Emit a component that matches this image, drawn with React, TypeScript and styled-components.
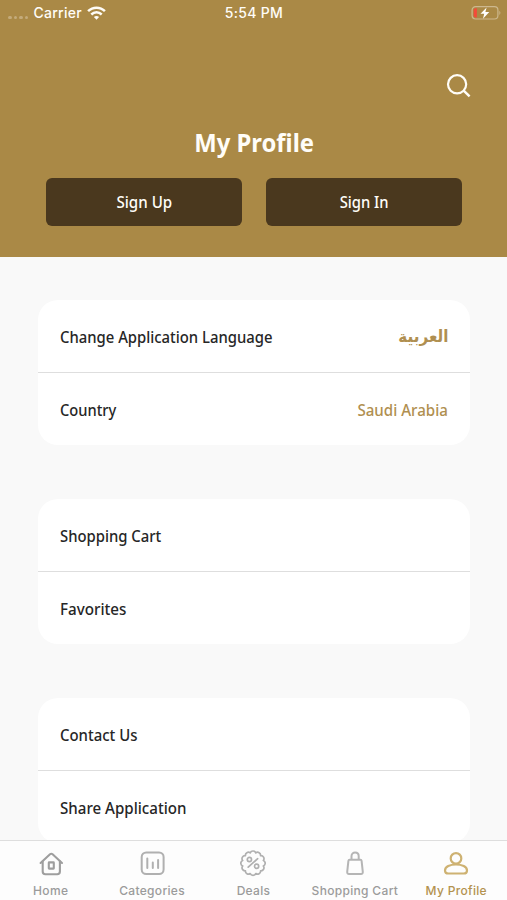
import React from "react";
import styled, { createGlobalStyle } from "styled-components";

const gold = "#aa8946";

const GlobalStyle = createGlobalStyle`
  * { box-sizing: border-box; }
  body { margin: 0; background: #f9f9f9; }
  button { border: 0; padding: 0; background: none; font: inherit; color: inherit; }
`;

const Screen = styled.div`
  display: flex;
  flex-direction: column;
  height: 900px;
  width: 507px;
  overflow: hidden;
  background: #f9f9f9;
  font-family: "Noto Sans", "DejaVu Sans", sans-serif;
`;

const Header = styled.header`
  flex: none;
  height: 256.5px;
  background: ${gold};
  color: #fffdf8;
  display: flex;
  flex-direction: column;
`;

const StatusBar = styled.div`
  height: 26px;
  display: grid;
  grid-template-columns: 1fr auto 1fr;
  align-items: center;
  padding: 0 6px 0 8px;
  font: 500 14px/26px Inter, sans-serif;
  letter-spacing: 0.25px;
`;

const StatusLeft = styled.div`
  display: flex;
  align-items: center;
  gap: 5.5px;
`;

const StatusRight = styled.div`
  display: flex;
  justify-content: flex-end;
`;

const SignalDots = styled.div`
  display: flex;
  gap: 2px;
  padding-top: 9px;
  i { width: 3.5px; height: 3.5px; border-radius: 50%; background: #c4ab7b; }
`;

const Clock = styled.span`
  margin-left: -1px;
  letter-spacing: 0.3px;
`;

const SearchRow = styled.div`
  display: flex;
  justify-content: flex-end;
  padding: 47px 36px 0 0;
  svg { display: block; }
`;

const Title = styled.h1`
  margin: 25px 0 0;
  padding-left: 1px;
  text-align: center;
  font-size: 25.5px;
  line-height: 38px;
  font-weight: 700;
`;

const Actions = styled.div`
  display: grid;
  grid-template-columns: 1fr 1fr;
  gap: 24px;
  padding: 0 45px 0 46px;
  margin-top: 16.5px;
`;

const ActionButton = styled.button`
  height: 48.5px;
  border-radius: 6px;
  background: #4a381e;
  font-size: 17px;
  font-weight: 500;
`;

const Text = styled.span<{ $scale?: number; $origin?: string }>`
  display: inline-block;
  white-space: nowrap;
  transform: scaleX(${(p) => p.$scale ?? 1});
  transform-origin: ${(p) => p.$origin ?? "center"};
`;

const Content = styled.main`
  flex: 1;
  min-height: 0;
  overflow: hidden;
  padding: 43.7px 37px 0 38px;
  display: flex;
  flex-direction: column;
  gap: 54.7px;
`;

const Card = styled.section`
  flex: none;
  background: #fff;
  border-radius: 20px;
`;

const Row = styled.div`
  height: 72px;
  padding: 1px 22px 0 21.5px;
  display: flex;
  align-items: center;
  justify-content: space-between;
  font-size: 16.5px;
  font-weight: 550;
  color: #262626;
  & + & {
    height: 72.4px;
    border-top: 1px solid #dedede;
  }
`;

const Value = styled.span<{ $arabic?: boolean }>`
  color: #b08f50;
  ${(p) => p.$arabic && `font: 700 16.5px/22px "DejaVu Sans", sans-serif;`}
`;

const TabBar = styled.nav`
  flex: none;
  height: 60px;
  border-top: 1px solid #dedede;
  background: #fdfdfd;
  display: grid;
  grid-template-columns: repeat(5, minmax(0, 1fr));
`;

const Tab = styled.button<{ $active?: boolean }>`
  display: flex;
  flex-direction: column;
  align-items: center;
  padding-top: 8px;
  gap: 4px;
  color: ${(p) => (p.$active ? "#b3924f" : "#9b9b9b")};
  font: 500 12px/20px Inter, sans-serif;
  letter-spacing: 0.32px;
  white-space: nowrap;
  svg { display: block; flex: none; }
`;

const Wifi = () => (
  <svg width="19" height="14" viewBox="0 0 19 14" fill="none" stroke="#fffdf8" strokeWidth="2.5">
    <path d="M1.1 5.2C5.8.5 13.2.5 17.9 5.2" />
    <path d="M4.3 8.5c3-2.9 7.4-2.9 10.4 0" />
    <path d="M6.9 11.1c1.5-1.4 3.7-1.4 5.2 0L9.5 13.7Z" fill="#fffdf8" stroke="none" />
  </svg>
);

const Battery = () => (
  <svg width="30" height="16" viewBox="0 0 30 16" fill="none">
    <rect x="1.1" y="1.6" width="25.8" height="12.4" rx="3.5" stroke="#cdb88e" strokeWidth="1.2" />
    <path d="M28.4 5.7c1.3.8 1.3 3.4 0 4.2Z" fill="#cdb88e" />
    <path d="M5.9 3.2v9.2H4.6c-1 0-1.9-.7-1.9-1.8V5c0-1.1.9-1.8 1.9-1.8Z" fill="#f34b39" />
    <path d="M15.6 2.4 9.5 8.8h3.7l-1.2 4.9 6.3-6.8h-3.9Z" fill="#fff" />
  </svg>
);

const SearchIcon = () => (
  <svg width="25" height="25" viewBox="0 0 25 25" fill="none" stroke="#fffdf8" strokeWidth="2.2">
    <circle cx="11.1" cy="11.3" r="9.1" />
    <path d="m17.4 17.4 6.2 5.9" strokeWidth="2.5" />
  </svg>
);

const HomeIcon = () => (
  <svg width="26" height="28" viewBox="0 0 26 28" fill="none" stroke="#9e9e9e" strokeWidth="2.1" strokeLinejoin="round" strokeLinecap="round">
    <path d="M2.6 14 12 5.3c.9-.8 1.7-.8 2.6 0L24 14" />
    <path d="M4.7 12.4v10.1c0 1.7 1 2.7 2.7 2.7h11.8c1.7 0 2.7-1 2.7-2.7V12.4" />
    <rect x="10.8" y="13.4" width="5" height="6.2" rx=".4" />
  </svg>
);

const CategoriesIcon = () => (
  <svg width="26" height="28" viewBox="0 0 26 28" fill="none" stroke="#b0b0b0" strokeWidth="2" strokeLinecap="round">
    <rect x="2.7" y="3.4" width="21.9" height="21.6" rx="4.5" />
    <path d="M8.3 9.6v9.3M13.8 13.6v5.3M19.1 11v7.9" />
  </svg>
);

const bumps = Array.from({ length: 12 }, (_, i) => {
  const point = (deg: number) => {
    const a = ((deg - 90) * Math.PI) / 180;
    return `${(13 + 10.7 * Math.cos(a)).toFixed(2)} ${(14.2 + 10.7 * Math.sin(a)).toFixed(2)}`;
  };
  return `${i === 0 ? `M${point(-15)}` : ""}A3 3 0 0 1 ${point(i * 30 + 15)}`;
}).join("");

const DealsIcon = () => (
  <svg width="26" height="28" viewBox="0 0 26 28" fill="none" stroke="#b0b0b0" strokeWidth="1.7" strokeLinecap="round" strokeLinejoin="round">
    <path d={`${bumps}Z`} />
    <circle cx="9.4" cy="10.5" r="2.1" />
    <circle cx="16.6" cy="17.3" r="2.1" />
    <path d="m8.2 18.2 9.5-8.5" />
  </svg>
);

const BagIcon = () => (
  <svg width="26" height="28" viewBox="0 0 26 28" fill="none" stroke="#b5b5b5" strokeWidth="2" strokeLinejoin="round">
    <path d="M7.5 10.8h11c.7 0 1 .4 1.1 1l1.2 11.1c.1 1.3-.5 2.1-1.8 2.1H7c-1.3 0-1.9-.8-1.8-2.1l1.2-11.1c.1-.6.4-1 1.1-1Z" />
    <path d="M9.5 10.8V7.2c0-4.8 7.2-4.8 7.2 0v3.6" />
  </svg>
);

const ProfileIcon = () => (
  <svg width="26" height="28" viewBox="0 0 26 28" fill="none" stroke="#ceb272" strokeWidth="2.2">
    <circle cx="13" cy="9.4" r="5.3" />
    <path d="M13 15.5c6 0 11 2.3 11 5.9 0 2.1-1.4 3.1-3.4 3.1H5.4c-2 0-3.4-1-3.4-3.1 0-3.6 5-5.9 11-5.9Z" />
  </svg>
);

const tabs = [
  { label: "Home", Icon: HomeIcon },
  { label: "Categories", Icon: CategoriesIcon },
  { label: "Deals", Icon: DealsIcon },
  { label: "Shopping Cart", Icon: BagIcon },
  { label: "My Profile", Icon: ProfileIcon, active: true },
];

type Item = { label: string; scale: number; value?: string; valueScale?: number; arabic?: boolean };

const groups: Item[][] = [
  [
    { label: "Change Application Language", scale: 0.9, value: "العربية", valueScale: 0.92, arabic: true },
    { label: "Country", scale: 0.89, value: "Saudi Arabia", valueScale: 0.915 },
  ],
  [
    { label: "Shopping Cart", scale: 0.9 },
    { label: "Favorites", scale: 0.92 },
  ],
  [
    { label: "Contact Us", scale: 0.905 },
    { label: "Share Application", scale: 0.915 },
  ],
];

export default function App() {
  return (
    <Screen>
      <GlobalStyle />
      <Header>
        <StatusBar>
          <StatusLeft>
            <SignalDots><i /><i /><i /><i /></SignalDots>
            <span>Carrier</span>
            <Wifi />
          </StatusLeft>
          <Clock>5:54 PM</Clock>
          <StatusRight><Battery /></StatusRight>
        </StatusBar>
        <SearchRow><SearchIcon /></SearchRow>
        <Title><Text $scale={0.935}>My Profile</Text></Title>
        <Actions>
          <ActionButton><Text $scale={0.89}>Sign Up</Text></ActionButton>
          <ActionButton><Text $scale={0.87}>Sign In</Text></ActionButton>
        </Actions>
      </Header>
      <Content>
        {groups.map((items) => (
          <Card key={items[0].label}>
            {items.map((item) => (
              <Row key={item.label}>
                <Text $scale={item.scale} $origin="left">{item.label}</Text>
                {item.value && (
                  <Value $arabic={item.arabic}>
                    <Text $scale={item.valueScale} $origin="right">{item.value}</Text>
                  </Value>
                )}
              </Row>
            ))}
          </Card>
        ))}
      </Content>
      <TabBar>
        {tabs.map(({ label, Icon, active }) => (
          <Tab key={label} $active={active}>
            <Icon />
            {label}
          </Tab>
        ))}
      </TabBar>
    </Screen>
  );
}
